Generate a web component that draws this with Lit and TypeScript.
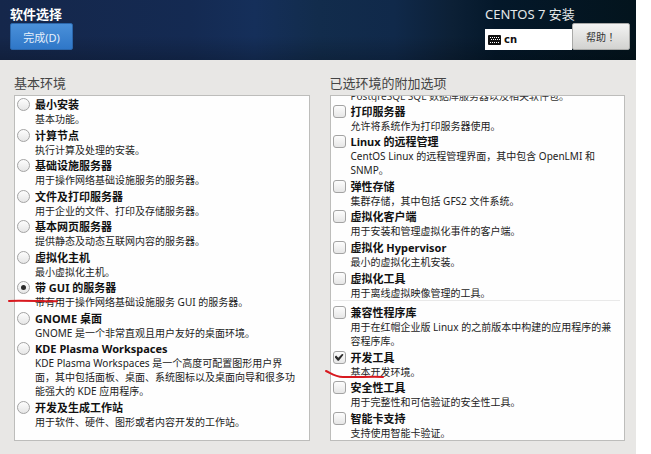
import { LitElement, html, css, svg, nothing } from "lit";
import { customElement, property } from "lit/decorators.js";

type Mark = "line" | "curve";

interface Option {
  title: string;
  text: string;
  selected?: boolean;
  mark?: Mark;
  divided?: boolean;
}

const environments: Option[] = [
  { title: "最小安装", text: "基本功能。" },
  { title: "计算节点", text: "执行计算及处理的安装。" },
  { title: "基础设施服务器", text: "用于操作网络基础设施服务的服务器。" },
  { title: "文件及打印服务器", text: "用于企业的文件、打印及存储服务器。" },
  { title: "基本网页服务器", text: "提供静态及动态互联网内容的服务器。" },
  { title: "虚拟化主机", text: "最小虚拟化主机。" },
  { title: "带 GUI 的服务器", text: "带有用于操作网络基础设施服务 GUI 的服务器。", selected: true, mark: "line" },
  { title: "GNOME 桌面", text: "GNOME 是一个非常直观且用户友好的桌面环境。" },
  {
    title: "KDE Plasma Workspaces",
    text: "KDE Plasma Workspaces 是一个高度可配置图形用户界\n面，其中包括面板、桌面、系统图标以及桌面向导和很多功\n能强大的 KDE 应用程序。",
  },
  { title: "开发及生成工作站", text: "用于软件、硬件、图形或者内容开发的工作站。" },
];

const addons: Option[] = [
  { title: "打印服务器", text: "允许将系统作为打印服务器使用。" },
  { title: "Linux 的远程管理", text: "CentOS Linux 的远程管理界面，其中包含 OpenLMI 和\nSNMP。" },
  { title: "弹性存储", text: "集群存储，其中包括 GFS2 文件系统。" },
  { title: "虚拟化客户端", text: "用于安装和管理虚拟化事件的客户端。" },
  { title: "虚拟化 Hypervisor", text: "最小的虚拟化主机安装。" },
  { title: "虚拟化工具", text: "用于离线虚拟映像管理的工具。" },
  { title: "兼容性程序库", text: "用于在红帽企业版 Linux 的之前版本中构建的应用程序的兼\n容程序库。", divided: true },
  { title: "开发工具", text: "基本开发环境。", selected: true, mark: "curve" },
  { title: "安全性工具", text: "用于完整性和可信验证的安全性工具。" },
  { title: "智能卡支持", text: "支持使用智能卡验证。" },
];

const marks = {
  line: svg`<path d="M1 3 C16 2.400 34 3.500 49 3.300" />`,
  curve: svg`<path d="M1 1 C7 4 10 7 18 7 C30 7.500 44 6.500 58 7" />`,
};

@customElement("option-list")
class OptionList extends LitElement {
  @property() kind: "radio" | "checkbox" = "radio";
  @property({ attribute: false }) items: Option[] = [];
  @property() cutText = "";

  static styles = css`
    :host {
      display: flex;
      flex: 1;
      box-sizing: border-box;
      border: 1px solid #bdbdbb;
      background: #fefefe;
    }
    .list {
      flex: 1;
      display: flex;
      flex-direction: column;
      justify-content: space-between;
      padding: 0 4px 11px 2px;
    }
    .list.checkbox {
      padding: 0 4px 0 2px;
    }
    .cut {
      display: flex;
      align-items: flex-end;
      height: 6px;
      overflow: hidden;
      padding-left: 18px;
      font-size: 10px;
      line-height: 12px;
      white-space: nowrap;
      color: #333;
    }
    .item {
      position: relative;
      display: flex;
      gap: 5px;
    }
    .divided {
      border-top: 1px solid #e9e9e9;
      padding-top: 3px;
    }
    .box {
      appearance: none;
      flex: none;
      box-sizing: border-box;
      width: 13px;
      height: 13px;
      margin: 2px 0 0;
      border: 1px solid #a3a3a3;
      border-radius: 3px;
      background: linear-gradient(#fdfdfd, #e6e6e6);
      display: grid;
      place-items: center;
    }
    .radio .box {
      border-radius: 50%;
    }
    .radio .box:checked::before {
      content: "";
      width: 5px;
      height: 5px;
      border-radius: 50%;
      background: #2b2b2b;
    }
    .checkbox .box:checked::before {
      content: "";
      width: 9px;
      height: 7px;
      background: #2b2b2b;
      clip-path: polygon(0 45%, 18% 26%, 42% 56%, 86% 0, 100% 14%, 48% 100%, 36% 100%);
    }
    .title {
      display: block;
      padding-top: 2px;
      font-size: 11px;
      line-height: 14px;
      font-weight: 700;
      color: #111;
      white-space: nowrap;
    }
    .text {
      display: block;
      font-size: 10px;
      line-height: 14px;
      color: #222;
      white-space: pre;
    }
    .mark {
      position: absolute;
      overflow: visible;
      fill: none;
      stroke: #d8191f;
      stroke-width: 2;
      stroke-linecap: round;
      pointer-events: none;
    }
    .line {
      left: -9px;
      top: 19px;
      width: 52px;
      height: 6px;
    }
    .curve {
      left: -8px;
      top: 21px;
      width: 60px;
      height: 9px;
    }
  `;

  render() {
    return html`<div class="list ${this.kind}">
      ${this.cutText ? html`<div class="cut">${this.cutText}</div>` : nothing}
      ${this.items.map(
        (item) => html`<label class="item ${item.divided ? "divided" : ""}">
          <input class="box" type=${this.kind} name="choice" ?checked=${item.selected} />
          <span><span class="title">${item.title}</span><span class="text">${item.text}</span></span>
          ${item.mark ? html`<svg class="mark ${item.mark}" aria-hidden="true">${marks[item.mark]}</svg>` : nothing}
        </label>`
      )}
    </div>`;
  }
}

@customElement("app-root")
class AppRoot extends LitElement {
  static styles = css`
    :host {
      display: flex;
      flex-direction: column;
      box-sizing: border-box;
      min-height: 100vh;
      border-right: 15px solid #fff;
      background: #e8e7e5;
      font-family: "Noto Sans", "Noto Sans CJK SC", sans-serif;
    }
    .header {
      display: flex;
      justify-content: space-between;
      box-sizing: border-box;
      height: 60px;
      padding: 5px 6px 0 10px;
      background:
        linear-gradient(#0000 60%, #0003),
        linear-gradient(90deg, #15274b, #142a52 30%, #152f5a 40%, #122c4c 50%, #10294a 62%, #0c2036 71%, #04182a 78%, #03141d);
      color: #fff;
    }
    .side {
      display: flex;
      flex-direction: column;
      align-items: flex-start;
    }
    .heading {
      margin: 0;
      font-size: 13px;
      line-height: 18px;
      font-weight: 700;
    }
    .product {
      font-weight: 400;
      color: #e4e8ea;
    }
    .tools {
      display: flex;
      align-items: flex-end;
    }
    .button {
      box-sizing: border-box;
      height: 27px;
      padding: 0;
      border: 1px solid #2a66ab;
      border-radius: 2px;
      background: linear-gradient(#4a90d9, #2f77c8);
      color: #e6f0fb;
      font: 11px "Noto Sans", "Noto Sans CJK SC", sans-serif;
    }
    .done {
      width: 63px;
    }
    .help {
      width: 58px;
      border-color: #a9a9a7;
      background: linear-gradient(#f3f3f2, #d2d2d0);
      color: #333;
      font: 10px "Noto Sans CJK TC", sans-serif;
    }
    .layout {
      display: flex;
      align-items: center;
      gap: 3px;
      box-sizing: border-box;
      width: 87px;
      height: 21px;
      padding: 0 3px;
      border: 0;
      background: #fff;
      color: #111;
      font: 700 10px "DejaVu Sans", sans-serif;
    }
    .keyboard {
      width: 13px;
      height: 10px;
    }
    .columns {
      flex: 1;
      display: grid;
      grid-template-columns: 1fr 1fr;
      gap: 20px;
      padding: 14px 11px 13px 14px;
    }
    .column {
      display: flex;
      flex-direction: column;
      gap: 3px;
    }
    .caption {
      margin: 0;
      font-size: 13px;
      line-height: 18px;
      font-weight: 400;
      color: #444;
    }
  `;

  render() {
    return html`
      <header class="header">
        <div class="side">
          <h1 class="heading">软件选择</h1>
          <button class="button done">完成(D)</button>
        </div>
        <div class="side">
          <div class="heading product">CENTOS 7 安装</div>
          <div class="tools">
            <button class="layout">
              <svg class="keyboard" viewBox="0 0 13 10" aria-hidden="true">
                <rect width="13" height="10" rx="1" fill="#111" />
                <path d="M2 2.500h9M3 4.500h9M2 7.500h1M4 7.500h5M10 7.500h1" stroke="#fff" stroke-dasharray="1 1" />
              </svg>
              cn
            </button>
            <button class="button help">帮助！</button>
          </div>
        </div>
      </header>
      <main class="columns">
        <section class="column">
          <h2 class="caption">基本环境</h2>
          <option-list kind="radio" .items=${environments}></option-list>
        </section>
        <section class="column">
          <h2 class="caption">已选环境的附加选项</h2>
          <option-list kind="checkbox" .items=${addons} .cutText=${"PostgreSQL SQL 数据库服务器以及相关软件包。"}></option-list>
        </section>
      </main>
    `;
  }
}
